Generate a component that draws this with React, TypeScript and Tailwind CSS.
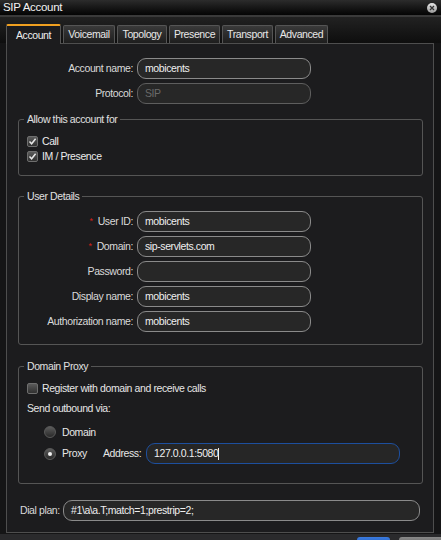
import React from "react";

const font = { fontFamily: '"Liberation Sans", Arial, sans-serif' };

function Check({ checked }: { checked?: boolean }) {
  return (
    <span className="w-[11px] h-[11px] rounded-[2px] border border-[#6e6e6e] bg-gradient-to-b from-[#5a5a5a] to-[#303030] flex items-center justify-center shrink-0">
      {checked && (
        <svg width="9" height="9" viewBox="0 0 9 9">
          <path d="M1.5 4.6 L3.6 6.8 L7.6 1.8" stroke="#e8e8e8" strokeWidth="1.5" fill="none" />
        </svg>
      )}
    </span>
  );
}

function Radio({ on }: { on?: boolean }) {
  return (
    <span className="w-[12px] h-[12px] rounded-full border border-[#5a5a5a] bg-gradient-to-b from-[#5c5c5c] to-[#2a2a2a] flex items-center justify-center shrink-0">
      {on && <span className="w-[4px] h-[4px] rounded-full bg-[#f2f2f2]" />}
    </span>
  );
}

function Field({ value, disabled, className }: { value?: string; disabled?: boolean; className?: string }) {
  return (
    <div
      className={`h-[21px] rounded-[9px] border bg-[#272727] flex items-center px-[7px] shrink-0 ${
        disabled ? "text-[#6a6a6a] border-[#5e5e5e]" : "text-[#efefef] border-[#8a8a8a]"
      } ${className ?? "w-[174px]"}`}
    >
      {value}
    </div>
  );
}

function Row({
  label,
  value,
  required,
  disabled,
  labelWidth,
}: {
  label: string;
  value?: string;
  required?: boolean;
  disabled?: boolean;
  labelWidth: string;
}) {
  return (
    <div className="flex items-center gap-[4px]">
      <div className={`${labelWidth} text-right text-[#dadada] whitespace-nowrap shrink-0`}>
        {required && <span className="text-[#d0201a] mr-[5px] text-[9px] align-top">*</span>}
        {label}
      </div>
      <Field value={value} disabled={disabled} />
    </div>
  );
}

const tabs = [
  { name: "Voicemail", w: "w-[52px]" },
  { name: "Topology", w: "w-[50px]" },
  { name: "Presence", w: "w-[51px]" },
  { name: "Transport", w: "w-[51px]" },
  { name: "Advanced", w: "w-[53px]" },
];

export default function App() {
  return (
    <div
      className="w-[441px] h-[540px] overflow-hidden bg-[#151516] text-[10.5px] tracking-[-0.4px] leading-[13px]"
      style={font}
    >
      {/* title bar */}
      <div className="h-[15px] bg-gradient-to-b from-[#2c2c2c] to-[#050505] flex items-center justify-between pl-[3px] pr-[4px]">
        <span className="text-[11.5px] tracking-[-0.3px] text-[#f2f2f2]">SIP Account</span>
        <span className="w-[10px] h-[10px] rounded-full bg-gradient-to-b from-[#e6e6e6] to-[#9a9a9a] flex items-center justify-center">
          <svg width="6" height="6" viewBox="0 0 6 6">
            <path d="M1 1 L5 5 M5 1 L1 5" stroke="#333" strokeWidth="1.3" />
          </svg>
        </span>
      </div>
      <div className="h-[2px] bg-[#3a3a3a]" />

      {/* tab strip */}
      <div className="h-[26px] bg-gradient-to-b from-[#222] to-[#0e0e0e] flex items-end pl-[6px] gap-[1px]">
        <div className="relative z-10 -mb-px w-[55px] h-[20px] border-x border-[#555] border-t-2 border-t-[#f0a020] rounded-t-[2px] bg-[#1c1c1e] text-[#f0f0f0] flex items-center justify-center">
          Account
        </div>
        {tabs.map((t) => (
          <div
            key={t.name}
            className={`${t.w} h-[18px] border border-b-0 border-[#555] rounded-t-[2px] bg-gradient-to-b from-[#3a3a3a] to-[#1e1e1e] text-[#e8e8e8] flex items-center justify-center ml-[1px]`}
          >
            {t.name}
          </div>
        ))}
      </div>

      {/* panel */}
      <div className="ml-[6px] w-[428px] h-[490px] border border-[#4e4e4e] bg-[#1c1c1e] pt-[14px]">
        <div className="flex flex-col gap-[4px]">
          <Row label="Account name:" value="mobicents" labelWidth="w-[126px]" />
          <Row label="Protocol:" value="SIP" disabled labelWidth="w-[126px]" />
        </div>

        <fieldset className="mt-[9px] ml-[11px] w-[405px] h-[63px] border border-[#555] rounded-[3px]">
          <legend className="ml-[5px] px-[3px] text-[#e0e0e0]">Allow this account for</legend>
          <div className="pl-[8px] pt-[9px] flex flex-col gap-[3px] text-[#ececec]">
            <label className="flex items-center gap-[4px] h-[12px]">
              <Check checked />
              Call
            </label>
            <label className="flex items-center gap-[4px] h-[12px]">
              <Check checked />
              IM / Presence
            </label>
          </div>
        </fieldset>

        <fieldset className="mt-[14px] ml-[11px] w-[405px] h-[155px] border border-[#555] rounded-[3px]">
          <legend className="ml-[5px] px-[3px] text-[#e0e0e0]">User Details</legend>
          <div className="pt-[8px] flex flex-col gap-[4px]">
            <Row label="User ID:" value="mobicents" required labelWidth="w-[114px]" />
            <Row label="Domain:" value="sip-servlets.com" required labelWidth="w-[114px]" />
            <Row label="Password:" labelWidth="w-[114px]" />
            <Row label="Display name:" value="mobicents" labelWidth="w-[114px]" />
            <Row label="Authorization name:" value="mobicents" labelWidth="w-[114px]" />
          </div>
        </fieldset>

        <fieldset className="mt-[15px] ml-[11px] w-[405px] h-[124px] border border-[#555] rounded-[3px]">
          <legend className="ml-[5px] px-[3px] text-[#e0e0e0]">Domain Proxy</legend>
          <div className="pl-[8px] text-[#e6e6e6]">
            <label className="mt-[9px] flex items-center gap-[4px] h-[12px]">
              <Check />
              Register with domain and receive calls
            </label>
            <div className="mt-[8px] h-[13px]">Send outbound via:</div>
            <div className="mt-[11px] ml-[17px] flex items-center gap-[6px] h-[12px]">
              <Radio />
              Domain
            </div>
            <div className="mt-[5px] ml-[17px] flex items-center h-[21px]">
              <Radio on />
              <span className="ml-[6px] w-[41px]">Proxy</span>
              <span className="w-[43px]">Address:</span>
              <div className="w-[254px] h-[21px] rounded-[9px] border border-[#1d4f9e] bg-[#262626] flex items-center px-[7px] text-[#efefef]">
                127.0.0.1:5080
                <span className="w-px h-[12px] bg-[#f0f0f0]" />
              </div>
            </div>
          </div>
        </fieldset>

        <div className="mt-[16px] pl-[13px] flex items-center gap-[4px]">
          <span className="w-[39px] shrink-0 whitespace-nowrap text-[#dadada]">Dial plan:</span>
          <Field value="#1\a\a.T;match=1;prestrip=2;" className="w-[357px]" />
        </div>
      </div>

      {/* footer */}
      <div className="mt-[1px] h-[10px] bg-[#2a2a2c] flex justify-end gap-[9px] pt-[3px]">
        <div className="w-[33px] h-[12px] rounded-t-[3px] bg-gradient-to-b from-[#3a7be0] to-[#1b4fa8]" />
        <div className="w-[42px] h-[12px] rounded-tl-[3px] bg-gradient-to-b from-[#8a8a8a] to-[#555]" />
      </div>
    </div>
  );
}
